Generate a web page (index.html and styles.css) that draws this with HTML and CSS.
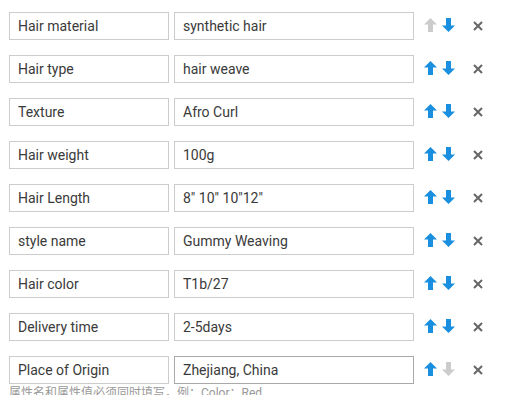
FILE: index.html
```html
<!DOCTYPE html>
<html lang="en">
<head>
<meta charset="UTF-8">
<title>Attributes</title>
<link rel="stylesheet" href="styles.css">
</head>
<body>

<div class="attr-list">
  <div class="attr-row">
    <input class="attr-name" type="text" value="Hair material">
    <input class="attr-value" type="text" value="synthetic hair">
    <div class="actions">
      <span class="arrow up off"><svg viewBox="0 0 13 14"><path d="M6.5 0L13 6.5H9V14H4V6.5H0Z"/></svg></span>
      <span class="arrow down"><svg viewBox="0 0 13 14"><path d="M6.5 14L13 7.5H9V0H4V7.5H0Z"/></svg></span>
      <span class="remove"><svg viewBox="0 0 10 10"><path d="M1 1L9 9M9 1L1 9"/></svg></span>
    </div>
  </div>
  <div class="attr-row">
    <input class="attr-name" type="text" value="Hair type">
    <input class="attr-value" type="text" value="hair weave">
    <div class="actions">
      <span class="arrow up"><svg viewBox="0 0 13 14"><path d="M6.5 0L13 6.5H9V14H4V6.5H0Z"/></svg></span>
      <span class="arrow down"><svg viewBox="0 0 13 14"><path d="M6.5 14L13 7.5H9V0H4V7.5H0Z"/></svg></span>
      <span class="remove"><svg viewBox="0 0 10 10"><path d="M1 1L9 9M9 1L1 9"/></svg></span>
    </div>
  </div>
  <div class="attr-row">
    <input class="attr-name" type="text" value="Texture">
    <input class="attr-value" type="text" value="Afro Curl">
    <div class="actions">
      <span class="arrow up"><svg viewBox="0 0 13 14"><path d="M6.5 0L13 6.5H9V14H4V6.5H0Z"/></svg></span>
      <span class="arrow down"><svg viewBox="0 0 13 14"><path d="M6.5 14L13 7.5H9V0H4V7.5H0Z"/></svg></span>
      <span class="remove"><svg viewBox="0 0 10 10"><path d="M1 1L9 9M9 1L1 9"/></svg></span>
    </div>
  </div>
  <div class="attr-row">
    <input class="attr-name" type="text" value="Hair weight">
    <input class="attr-value" type="text" value="100g">
    <div class="actions">
      <span class="arrow up"><svg viewBox="0 0 13 14"><path d="M6.5 0L13 6.5H9V14H4V6.5H0Z"/></svg></span>
      <span class="arrow down"><svg viewBox="0 0 13 14"><path d="M6.5 14L13 7.5H9V0H4V7.5H0Z"/></svg></span>
      <span class="remove"><svg viewBox="0 0 10 10"><path d="M1 1L9 9M9 1L1 9"/></svg></span>
    </div>
  </div>
  <div class="attr-row">
    <input class="attr-name" type="text" value="Hair Length">
    <input class="attr-value" type="text" value="8&quot; 10&quot; 10&quot;12&quot;">
    <div class="actions">
      <span class="arrow up"><svg viewBox="0 0 13 14"><path d="M6.5 0L13 6.5H9V14H4V6.5H0Z"/></svg></span>
      <span class="arrow down"><svg viewBox="0 0 13 14"><path d="M6.5 14L13 7.5H9V0H4V7.5H0Z"/></svg></span>
      <span class="remove"><svg viewBox="0 0 10 10"><path d="M1 1L9 9M9 1L1 9"/></svg></span>
    </div>
  </div>
  <div class="attr-row">
    <input class="attr-name" type="text" value="style name">
    <input class="attr-value" type="text" value="Gummy Weaving">
    <div class="actions">
      <span class="arrow up"><svg viewBox="0 0 13 14"><path d="M6.5 0L13 6.5H9V14H4V6.5H0Z"/></svg></span>
      <span class="arrow down"><svg viewBox="0 0 13 14"><path d="M6.5 14L13 7.5H9V0H4V7.5H0Z"/></svg></span>
      <span class="remove"><svg viewBox="0 0 10 10"><path d="M1 1L9 9M9 1L1 9"/></svg></span>
    </div>
  </div>
  <div class="attr-row">
    <input class="attr-name" type="text" value="Hair color">
    <input class="attr-value" type="text" value="T1b/27">
    <div class="actions">
      <span class="arrow up"><svg viewBox="0 0 13 14"><path d="M6.5 0L13 6.5H9V14H4V6.5H0Z"/></svg></span>
      <span class="arrow down"><svg viewBox="0 0 13 14"><path d="M6.5 14L13 7.5H9V0H4V7.5H0Z"/></svg></span>
      <span class="remove"><svg viewBox="0 0 10 10"><path d="M1 1L9 9M9 1L1 9"/></svg></span>
    </div>
  </div>
  <div class="attr-row">
    <input class="attr-name" type="text" value="Delivery time">
    <input class="attr-value" type="text" value="2-5days">
    <div class="actions">
      <span class="arrow up"><svg viewBox="0 0 13 14"><path d="M6.5 0L13 6.5H9V14H4V6.5H0Z"/></svg></span>
      <span class="arrow down"><svg viewBox="0 0 13 14"><path d="M6.5 14L13 7.5H9V0H4V7.5H0Z"/></svg></span>
      <span class="remove"><svg viewBox="0 0 10 10"><path d="M1 1L9 9M9 1L1 9"/></svg></span>
    </div>
  </div>
  <div class="attr-row">
    <input class="attr-name" type="text" value="Place of Origin">
    <input class="attr-value active" type="text" value="Zhejiang, China">
    <div class="actions">
      <span class="arrow up"><svg viewBox="0 0 13 14"><path d="M6.5 0L13 6.5H9V14H4V6.5H0Z"/></svg></span>
      <span class="arrow down off"><svg viewBox="0 0 13 14"><path d="M6.5 14L13 7.5H9V0H4V7.5H0Z"/></svg></span>
      <span class="remove"><svg viewBox="0 0 10 10"><path d="M1 1L9 9M9 1L1 9"/></svg></span>
    </div>
  </div>
  <div class="hint">属性名和属性值必须同时填写，例：Color：Red</div>
</div>

</body>
</html>
```

FILE: styles.css
```css
* {
  box-sizing: border-box;
}
body {
  margin: 0;
  background: #ffffff;
  font-family: Roboto, "Noto Sans CJK SC", sans-serif;
  color: #333333;
}
.attr-list {
  padding: 12px 0 0 9px;
  display: flex;
  flex-direction: column;
  gap: 15px;
}
.attr-row {
  display: flex;
  align-items: center;
  gap: 5px;
  height: 28px;
}
.attr-name,
.attr-value {
  height: 28px;
  border: 1px solid #cccccc;
  padding: 0 8px;
  font-family: Roboto, sans-serif;
  font-size: 14px;
  color: #3a3a3a;
  outline: none;
  margin: 0;
}
.attr-name {
  width: 160px;
}
.attr-value {
  width: 240px;
}
.attr-value.active {
  border-color: #a9a9a9;
}
.actions {
  display: flex;
  align-items: center;
  margin-left: 5px;
  margin-top: -3px;
}
.arrow {
  width: 13px;
  height: 14px;
  display: block;
  margin-right: 5px;
}
.arrow svg {
  display: block;
  width: 13px;
  height: 14px;
  fill: #1a8fe0;
}
.arrow.off svg {
  fill: #cccccc;
}
.remove {
  margin-left: 13px;
  margin-top: 3px;
  display: block;
  width: 10px;
  height: 10px;
}
.remove svg {
  display: block;
  width: 10px;
  height: 10px;
  stroke: #666666;
  stroke-width: 2;
}
.hint {
  margin-top: -14px;
  font-size: 12px;
  line-height: 16px;
  color: #999999;
}
```
